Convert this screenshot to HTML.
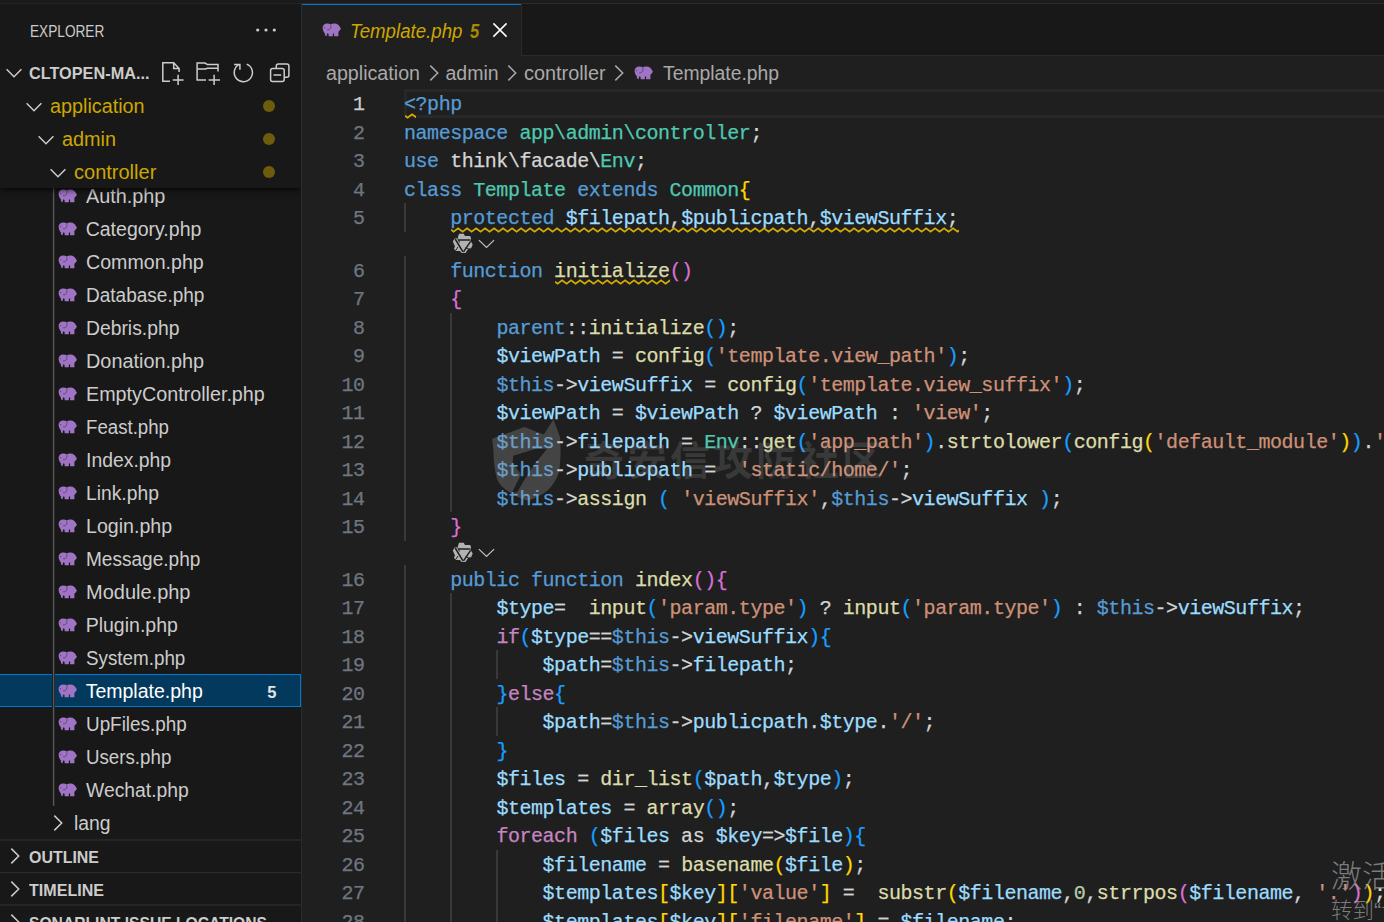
<!DOCTYPE html>
<html lang="zh"><head><meta charset="utf-8"><title>Template.php - Visual Studio Code</title>
<style>
html,body{margin:0;padding:0}
body{width:1384px;height:922px;overflow:hidden;background:#1f1f1f;position:relative;font-family:"Liberation Sans","Noto Sans CJK SC",sans-serif;color:#ccc}
.abs,.tx,.ic,.ele,.ig,.ln,.cl,.sq,.sel,.dot,.lens,.hr{position:absolute}
.tx{white-space:pre;line-height:24px;transform-origin:0 50%;display:block}
.ig{width:2px}
.ln,.cl{height:28.5px;font:20.00px/28.5px "Liberation Mono",monospace;letter-spacing:-0.4560px;white-space:pre;padding-top:2.11px;box-sizing:border-box;-webkit-text-stroke:0.25px}
.ln{left:300px;width:64.500px;text-align:right;color:#6e7681;text-indent:0}
.ln.cur{color:#cccccc}
.cl{left:404px;color:#d4d4d4}
.k{color:#569cd6}.c{color:#c586c0}.v{color:#9cdcfe}.s{color:#ce9178}.f{color:#dcdcaa}.t{color:#4ec9b0}.n{color:#b5cea8}
.b1{color:#ffd700}.b2{color:#da70d6}.b3{color:#179fff}
.sq{overflow:hidden}.sq path{fill:none;stroke:#d4ad00;stroke-width:1.750px}
.sel{left:0;width:301px;height:33.600px;background:#04395e;box-sizing:border-box;border:1.500px solid #0078d4;border-left:0}
.dot{left:263px;width:12px;height:12px;border-radius:50%;background:#6d5c0e}
.hr{left:0;width:301px;height:1px;background:#2b2b2b;box-shadow:0 -1px 0 rgba(43,43,43,.35)}
</style></head><body>
<!-- top strip -->
<div class="abs" style="left:0;top:0;width:1384px;height:3px;background:#1c1c1c"></div>
<div class="abs" style="left:0;top:3px;width:1384px;height:1px;background:#2b2b2b"></div>

<!-- tabs -->
<div class="abs" style="left:302px;top:4px;width:1082px;height:52px;background:#181818"></div>
<div class="abs" style="left:302px;top:55px;width:1082px;height:1px;background:#2b2b2b"></div>
<div class="abs" style="left:302px;top:4px;width:219px;height:52px;background:#1f1f1f;border-top:1.500px solid #0078d4;box-sizing:border-box"></div>
<div class="abs" style="left:521px;top:4px;width:1px;height:52px;background:#2b2b2b"></div>
<svg class="ele" style="left:321.8px;top:22.5px" width="20" height="14" viewBox="0 0 20 14"><path fill="#a074c4" d="M.7 5.500C.3 3.200 2 .6 4.800.4 6.300.3 7.800.5 8.700 1.200 9.800.5 11.200.3 12.600.4c2.600 0 4.800 1.800 5.700 4.400l.8 1.300-.9.500c-.2.800-.9 1.600-1.800 2.200V13.200H12.100V10.400H10.900V13.200H6.600V10.900l-1-.6c-.6.500-1 1.300-.7 2.100l-.7.900c-1-.4-1.600-1.700-1.300-3C1.800 9.300.9 7.600.7 5.500Z"/><path fill="none" stroke="#2c1b3a" stroke-opacity=".55" stroke-width=".9" d="M8.700 1.200c.7 1.800.3 4-1.100 5.100-.8.600-1.800.7-2.600.3"/><circle cx="2.700" cy="4.600" r=".55" fill="#2c1b3a" fill-opacity=".7"/></svg>
<span class="tx" style="left:350.40px;top:18.84px;font-size:19.50px;color:#cca700;font-style:italic;transform:scaleX(0.9570);">Template.php</span>
<span class="tx" style="left:470.30px;top:18.84px;font-size:19.50px;color:#a88b00;font-weight:700;font-style:italic;transform:scaleX(0.8472);">5</span>
<svg class="ic" style="left:488px;top:18px" width="24" height="24" viewBox="0 0 24 24"><path d="M5.400 5.400 L18.600 18.600 M18.600 5.400 L5.400 18.600" stroke="#ffffff" stroke-width="1.500" fill="none"/></svg>

<!-- breadcrumbs -->
<span class="tx" style="left:326.30px;top:60.84px;font-size:19.50px;color:#a9a9a9;transform:scaleX(1.0082);">application</span>
<svg class="ic" style="left:421.5px;top:60.5px" width="24" height="24" viewBox="0 0 24 24"><path d="M8.300 4.600 L15.700 12 L8.300 19.400" fill="none" stroke="#a9a9a9" stroke-width="1.500"/></svg>
<span class="tx" style="left:445.50px;top:60.84px;font-size:19.50px;color:#a9a9a9;">admin</span>
<svg class="ic" style="left:500.3px;top:60.5px" width="24" height="24" viewBox="0 0 24 24"><path d="M8.300 4.600 L15.700 12 L8.300 19.400" fill="none" stroke="#a9a9a9" stroke-width="1.500"/></svg>
<span class="tx" style="left:523.90px;top:60.84px;font-size:19.50px;color:#a9a9a9;transform:scaleX(1.0187);">controller</span>
<svg class="ic" style="left:607.0px;top:60.5px" width="24" height="24" viewBox="0 0 24 24"><path d="M8.300 4.600 L15.700 12 L8.300 19.400" fill="none" stroke="#a9a9a9" stroke-width="1.500"/></svg>
<svg class="ele" style="left:634.2px;top:66.0px" width="20" height="14" viewBox="0 0 20 14"><path fill="#a074c4" d="M.7 5.500C.3 3.200 2 .6 4.800.4 6.300.3 7.800.5 8.700 1.200 9.800.5 11.200.3 12.600.4c2.600 0 4.800 1.800 5.700 4.400l.8 1.300-.9.500c-.2.800-.9 1.600-1.800 2.200V13.200H12.100V10.400H10.900V13.200H6.600V10.900l-1-.6c-.6.500-1 1.300-.7 2.100l-.7.900c-1-.4-1.600-1.700-1.300-3C1.800 9.300.9 7.600.7 5.500Z"/><path fill="none" stroke="#2c1b3a" stroke-opacity=".55" stroke-width=".9" d="M8.700 1.200c.7 1.800.3 4-1.100 5.100-.8.600-1.800.7-2.600.3"/><circle cx="2.700" cy="4.600" r=".55" fill="#2c1b3a" fill-opacity=".7"/></svg>
<span class="tx" style="left:663.20px;top:60.84px;font-size:19.50px;color:#a9a9a9;transform:scaleX(0.9908);">Template.php</span>

<!-- editor -->
<div class="abs" style="left:404px;top:89px;width:990px;height:29px;box-sizing:border-box;border:3px solid #282828"></div>
<div class="ig" style="left:404px;top:203.00px;height:28.50px;background:#393939"></div>
<div class="ig" style="left:404px;top:255.50px;height:285.00px;background:#393939"></div>
<div class="ig" style="left:404px;top:564.50px;height:357.50px;background:#393939"></div>
<div class="ig" style="left:450px;top:312.50px;height:199.50px;background:#393939"></div>
<div class="ig" style="left:450px;top:593.00px;height:329.00px;background:#393939"></div>
<div class="ig" style="left:496px;top:650.00px;height:28.50px;background:#393939"></div>
<div class="ig" style="left:496px;top:707.00px;height:28.50px;background:#393939"></div>
<div class="ig" style="left:496px;top:849.50px;height:72.50px;background:#393939"></div>
<div class="ln cur" style="top:89.00px">1</div>
<div class="cl" style="top:89.00px"><span class="k">&lt;?php</span></div>
<svg class="sq" style="left:404.50px;top:112.50px" width="11.55" height="6" viewBox="0 0 11.55 6"><path d="M0.0 2.7 L2.6 4.6 L7.1 1.3 L11.6 4.6 L16.1 1.3"/></svg>
<div class="ln" style="top:117.50px">2</div>
<div class="cl" style="top:117.50px"><span class="k">namespace</span> <span class="t">app\admin\controller</span>;</div>
<div class="ln" style="top:146.00px">3</div>
<div class="cl" style="top:146.00px"><span class="k">use</span> think\facade\<span class="t">Env</span>;</div>
<div class="ln" style="top:174.50px">4</div>
<div class="cl" style="top:174.50px"><span class="k">class</span> <span class="t">Template</span> <span class="k">extends</span> <span class="t">Common</span><span class="b1">{</span></div>
<div class="ln" style="top:203.00px">5</div>
<div class="cl" style="top:203.00px">    <span class="k">protected</span> <span class="v">$filepath</span>,<span class="v">$publicpath</span>,<span class="v">$viewSuffix</span>;</div>
<svg class="sq" style="left:450.68px;top:226.50px" width="508.02" height="6" viewBox="0 0 508.02 6"><path d="M0.0 2.7 L2.6 4.6 L7.1 1.3 L11.6 4.6 L16.1 1.3 L20.6 4.6 L25.1 1.3 L29.6 4.6 L34.1 1.3 L38.6 4.6 L43.1 1.3 L47.6 4.6 L52.1 1.3 L56.6 4.6 L61.1 1.3 L65.6 4.6 L70.1 1.3 L74.6 4.6 L79.1 1.3 L83.6 4.6 L88.1 1.3 L92.6 4.6 L97.1 1.3 L101.6 4.6 L106.1 1.3 L110.6 4.6 L115.1 1.3 L119.6 4.6 L124.1 1.3 L128.6 4.6 L133.1 1.3 L137.6 4.6 L142.1 1.3 L146.6 4.6 L151.1 1.3 L155.6 4.6 L160.1 1.3 L164.6 4.6 L169.1 1.3 L173.6 4.6 L178.1 1.3 L182.6 4.6 L187.1 1.3 L191.6 4.6 L196.1 1.3 L200.6 4.6 L205.1 1.3 L209.6 4.6 L214.1 1.3 L218.6 4.6 L223.1 1.3 L227.6 4.6 L232.1 1.3 L236.6 4.6 L241.1 1.3 L245.6 4.6 L250.1 1.3 L254.6 4.6 L259.1 1.3 L263.6 4.6 L268.1 1.3 L272.6 4.6 L277.1 1.3 L281.6 4.6 L286.1 1.3 L290.6 4.6 L295.1 1.3 L299.6 4.6 L304.1 1.3 L308.6 4.6 L313.1 1.3 L317.6 4.6 L322.1 1.3 L326.6 4.6 L331.1 1.3 L335.6 4.6 L340.1 1.3 L344.6 4.6 L349.1 1.3 L353.6 4.6 L358.1 1.3 L362.6 4.6 L367.1 1.3 L371.6 4.6 L376.1 1.3 L380.6 4.6 L385.1 1.3 L389.6 4.6 L394.1 1.3 L398.6 4.6 L403.1 1.3 L407.6 4.6 L412.1 1.3 L416.6 4.6 L421.1 1.3 L425.6 4.6 L430.1 1.3 L434.6 4.6 L439.1 1.3 L443.6 4.6 L448.1 1.3 L452.6 4.6 L457.1 1.3 L461.6 4.6 L466.1 1.3 L470.6 4.6 L475.1 1.3 L479.6 4.6 L484.1 1.3 L488.6 4.6 L493.1 1.3 L497.6 4.6 L502.1 1.3 L506.6 4.6 L511.1 1.3 L515.6 4.6"/></svg>
<div class="ln" style="top:255.50px">6</div>
<div class="cl" style="top:255.50px">    <span class="k">function</span> <span class="f">initialize</span><span class="b2">()</span></div>
<svg class="sq" style="left:554.60px;top:279.00px" width="115.46" height="6" viewBox="0 0 115.46 6"><path d="M0.0 2.7 L2.6 4.6 L7.1 1.3 L11.6 4.6 L16.1 1.3 L20.6 4.6 L25.1 1.3 L29.6 4.6 L34.1 1.3 L38.6 4.6 L43.1 1.3 L47.6 4.6 L52.1 1.3 L56.6 4.6 L61.1 1.3 L65.6 4.6 L70.1 1.3 L74.6 4.6 L79.1 1.3 L83.6 4.6 L88.1 1.3 L92.6 4.6 L97.1 1.3 L101.6 4.6 L106.1 1.3 L110.6 4.6 L115.1 1.3 L119.6 4.6 L124.1 1.3"/></svg>
<div class="ln" style="top:284.00px">7</div>
<div class="cl" style="top:284.00px">    <span class="b2">{</span></div>
<div class="ln" style="top:312.50px">8</div>
<div class="cl" style="top:312.50px">        <span class="k">parent</span>::<span class="f">initialize</span><span class="b3">()</span>;</div>
<div class="ln" style="top:341.00px">9</div>
<div class="cl" style="top:341.00px">        <span class="v">$viewPath</span> = <span class="f">config</span><span class="b3">(</span><span class="s">'template.view_path'</span><span class="b3">)</span>;</div>
<div class="ln" style="top:369.50px">10</div>
<div class="cl" style="top:369.50px">        <span class="k">$this</span>-&gt;<span class="v">viewSuffix</span> = <span class="f">config</span><span class="b3">(</span><span class="s">'template.view_suffix'</span><span class="b3">)</span>;</div>
<div class="ln" style="top:398.00px">11</div>
<div class="cl" style="top:398.00px">        <span class="v">$viewPath</span> = <span class="v">$viewPath</span> ? <span class="v">$viewPath</span> : <span class="s">'view'</span>;</div>
<div class="ln" style="top:426.50px">12</div>
<div class="cl" style="top:426.50px">        <span class="k">$this</span>-&gt;<span class="v">filepath</span> = <span class="t">Env</span>::<span class="f">get</span><span class="b3">(</span><span class="s">'app_path'</span><span class="b3">)</span>.<span class="f">strtolower</span><span class="b3">(</span><span class="f">config</span><span class="b1">(</span><span class="s">'default_module'</span><span class="b1">)</span><span class="b3">)</span>.<span class="s">'/'</span></div>
<div class="ln" style="top:455.00px">13</div>
<div class="cl" style="top:455.00px">        <span class="k">$this</span>-&gt;<span class="v">publicpath</span> =  <span class="s">'static/home/'</span>;</div>
<div class="ln" style="top:483.50px">14</div>
<div class="cl" style="top:483.50px">        <span class="k">$this</span>-&gt;<span class="f">assign</span> <span class="b3">(</span> <span class="s">'viewSuffix'</span>,<span class="k">$this</span>-&gt;<span class="v">viewSuffix</span> <span class="b3">)</span>;</div>
<div class="ln" style="top:512.00px">15</div>
<div class="cl" style="top:512.00px">    <span class="b2">}</span></div>
<div class="ln" style="top:564.50px">16</div>
<div class="cl" style="top:564.50px">    <span class="k">public</span> <span class="k">function</span> <span class="f">index</span><span class="b2">()</span><span class="b2">{</span></div>
<div class="ln" style="top:593.00px">17</div>
<div class="cl" style="top:593.00px">        <span class="v">$type</span>=  <span class="f">input</span><span class="b3">(</span><span class="s">'param.type'</span><span class="b3">)</span> ? <span class="f">input</span><span class="b3">(</span><span class="s">'param.type'</span><span class="b3">)</span> : <span class="k">$this</span>-&gt;<span class="v">viewSuffix</span>;</div>
<div class="ln" style="top:621.50px">18</div>
<div class="cl" style="top:621.50px">        <span class="c">if</span><span class="b3">(</span><span class="v">$type</span>==<span class="k">$this</span>-&gt;<span class="v">viewSuffix</span><span class="b3">)</span><span class="b3">{</span></div>
<div class="ln" style="top:650.00px">19</div>
<div class="cl" style="top:650.00px">            <span class="v">$path</span>=<span class="k">$this</span>-&gt;<span class="v">filepath</span>;</div>
<div class="ln" style="top:678.50px">20</div>
<div class="cl" style="top:678.50px">        <span class="b3">}</span><span class="c">else</span><span class="b3">{</span></div>
<div class="ln" style="top:707.00px">21</div>
<div class="cl" style="top:707.00px">            <span class="v">$path</span>=<span class="k">$this</span>-&gt;<span class="v">publicpath</span>.<span class="v">$type</span>.<span class="s">'/'</span>;</div>
<div class="ln" style="top:735.50px">22</div>
<div class="cl" style="top:735.50px">        <span class="b3">}</span></div>
<div class="ln" style="top:764.00px">23</div>
<div class="cl" style="top:764.00px">        <span class="v">$files</span> = <span class="f">dir_list</span><span class="b3">(</span><span class="v">$path</span>,<span class="v">$type</span><span class="b3">)</span>;</div>
<div class="ln" style="top:792.50px">24</div>
<div class="cl" style="top:792.50px">        <span class="v">$templates</span> = <span class="f">array</span><span class="b3">()</span>;</div>
<div class="ln" style="top:821.00px">25</div>
<div class="cl" style="top:821.00px">        <span class="c">foreach</span> <span class="b3">(</span><span class="v">$files</span> as <span class="v">$key</span>=&gt;<span class="v">$file</span><span class="b3">)</span><span class="b3">{</span></div>
<div class="ln" style="top:849.50px">26</div>
<div class="cl" style="top:849.50px">            <span class="v">$filename</span> = <span class="f">basename</span><span class="b1">(</span><span class="v">$file</span><span class="b1">)</span>;</div>
<div class="ln" style="top:878.00px">27</div>
<div class="cl" style="top:878.00px">            <span class="v">$templates</span><span class="b1">[</span><span class="v">$key</span><span class="b1">]</span><span class="b1">[</span><span class="s">'value'</span><span class="b1">]</span> =  <span class="f">substr</span><span class="b1">(</span><span class="v">$filename</span>,<span class="n">0</span>,<span class="f">strrpos</span><span class="b2">(</span><span class="v">$filename</span>, <span class="s">'.'</span><span class="b2">)</span><span class="b1">)</span>;</div>
<div class="ln" style="top:906.50px">28</div>
<div class="cl" style="top:906.50px">            <span class="v">$templates</span><span class="b1">[</span><span class="v">$key</span><span class="b1">]</span><span class="b1">[</span><span class="s">'filename'</span><span class="b1">]</span> = <span class="v">$filename</span>;</div>
<svg class="lens" style="left:446px;top:230.00px" width="52" height="26" viewBox="0 0 52 26">
<path fill="#b2b2b2" d="M13 3.800 L17.800 3.800 L18.900 6.100 L24.200 6.100 L25.100 8.500 L24.200 10.300 L26.700 14.400 L25.100 18.200 L22.400 18.600 L19.600 23.100 L15.200 22.800 L14 20.900 L9.400 20.900 L8 18.400 L9 16.400 L6.800 11.400 L8.600 8.600 L11.600 8.300 Z"/>
<path fill="none" stroke="#1f1f1f" stroke-width="1.500" d="M12.800 9.900 H23.900 M9.200 9 L16.800 21.600 M24.600 11.400 L17.500 21.800"/>
<path fill="none" stroke="#1f1f1f" stroke-width="1" d="M11.600 8.300 L13.500 12.500 M22.400 18.600 L19.500 17.800 M9.400 20.900 L12 17"/>
<path d="M32.900 10.100 L40.500 17.400 L48.100 10.100" fill="none" stroke="#c0c0c0" stroke-width="1.250"/></svg>
<svg class="lens" style="left:446px;top:539.00px" width="52" height="26" viewBox="0 0 52 26">
<path fill="#b2b2b2" d="M13 3.800 L17.800 3.800 L18.900 6.100 L24.200 6.100 L25.100 8.500 L24.200 10.300 L26.700 14.400 L25.100 18.200 L22.400 18.600 L19.600 23.100 L15.200 22.800 L14 20.900 L9.400 20.900 L8 18.400 L9 16.400 L6.800 11.400 L8.600 8.600 L11.600 8.300 Z"/>
<path fill="none" stroke="#1f1f1f" stroke-width="1.500" d="M12.800 9.900 H23.900 M9.200 9 L16.800 21.600 M24.600 11.400 L17.500 21.800"/>
<path fill="none" stroke="#1f1f1f" stroke-width="1" d="M11.600 8.300 L13.500 12.500 M22.400 18.600 L19.500 17.800 M9.400 20.900 L12 17"/>
<path d="M32.900 10.100 L40.500 17.400 L48.100 10.100" fill="none" stroke="#c0c0c0" stroke-width="1.250"/></svg>

<!-- watermarks -->
<svg class="abs" style="left:484px;top:414px" width="100" height="92" viewBox="484 414 100 92"><path fill="#aaaaaa" fill-opacity=".27" fill-rule="evenodd" d="M492.200 438.700 L524.400 427 L543.900 434.400 L553.400 419.200 L560 437 L560.600 450 C560.600 458 560 466 559 472 C556.500 480 552.500 486 547.600 490.500 C541 495.500 534 499 527.400 500.600 C520.500 498.500 514 495.500 509 492 C503 488 499 484 497 479 C494.500 470 493.400 460 493.400 450 Z M536 448.700 L547 448.700 L536 462.600 L527.400 474.800 L517 492.500 L512 492.500 L521 474.500 L512.600 463 L513.300 455.800 Z"/></svg>
<div class="abs" style="left:584px;top:430.500px;font:700 40px/60px 'Liberation Sans','Noto Sans CJK SC',sans-serif;color:rgba(170,170,170,.185);white-space:nowrap;letter-spacing:3px">奇安信攻防社区</div>
<div class="abs" style="left:1331px;top:854.500px;font:300 31px/44px 'Liberation Sans','Noto Sans CJK SC',sans-serif;color:rgba(160,160,160,.72);white-space:nowrap">激活 Windows</div>
<div class="abs" style="left:1331px;top:896px;font:300 21.500px/30px 'Liberation Sans','Noto Sans CJK SC',sans-serif;color:rgba(160,160,160,.72);white-space:nowrap">转到“设置”以激活 Windows。</div>

<!-- sidebar -->
<div class="abs" style="left:0;top:4px;width:301px;height:918px;background:#181818"></div>
<div class="abs" style="left:0;top:0;width:301px;height:922px;overflow:hidden">
<svg class="ele" style="left:58.0px;top:188.5px" width="20" height="14" viewBox="0 0 20 14"><path fill="#a074c4" d="M.7 5.500C.3 3.200 2 .6 4.800.4 6.300.3 7.800.5 8.700 1.200 9.800.5 11.200.3 12.600.4c2.600 0 4.800 1.800 5.700 4.400l.8 1.300-.9.500c-.2.800-.9 1.600-1.800 2.200V13.200H12.100V10.400H10.900V13.200H6.600V10.900l-1-.6c-.6.500-1 1.300-.7 2.100l-.7.900c-1-.4-1.600-1.700-1.300-3C1.800 9.300.9 7.600.7 5.500Z"/><path fill="none" stroke="#2c1b3a" stroke-opacity=".55" stroke-width=".9" d="M8.700 1.200c.7 1.800.3 4-1.100 5.100-.8.600-1.800.7-2.600.3"/><circle cx="2.700" cy="4.600" r=".55" fill="#2c1b3a" fill-opacity=".7"/></svg>
<span class="tx" style="left:85.70px;top:183.94px;font-size:19.50px;color:#cccccc;transform:scaleX(1.0156);">Auth.php</span>
<svg class="ele" style="left:58.0px;top:221.5px" width="20" height="14" viewBox="0 0 20 14"><path fill="#a074c4" d="M.7 5.500C.3 3.200 2 .6 4.800.4 6.300.3 7.800.5 8.700 1.200 9.800.5 11.200.3 12.600.4c2.600 0 4.800 1.800 5.700 4.400l.8 1.300-.9.500c-.2.800-.9 1.600-1.800 2.200V13.200H12.100V10.400H10.900V13.200H6.600V10.900l-1-.6c-.6.500-1 1.300-.7 2.100l-.7.900c-1-.4-1.600-1.700-1.300-3C1.800 9.300.9 7.600.7 5.500Z"/><path fill="none" stroke="#2c1b3a" stroke-opacity=".55" stroke-width=".9" d="M8.700 1.200c.7 1.800.3 4-1.100 5.100-.8.600-1.800.7-2.600.3"/><circle cx="2.700" cy="4.600" r=".55" fill="#2c1b3a" fill-opacity=".7"/></svg>
<span class="tx" style="left:85.70px;top:216.94px;font-size:19.50px;color:#cccccc;">Category.php</span>
<svg class="ele" style="left:58.0px;top:254.5px" width="20" height="14" viewBox="0 0 20 14"><path fill="#a074c4" d="M.7 5.500C.3 3.200 2 .6 4.800.4 6.300.3 7.800.5 8.700 1.200 9.800.5 11.200.3 12.600.4c2.600 0 4.800 1.800 5.700 4.400l.8 1.300-.9.500c-.2.800-.9 1.600-1.800 2.200V13.200H12.100V10.400H10.900V13.200H6.600V10.900l-1-.6c-.6.500-1 1.300-.7 2.100l-.7.900c-1-.4-1.600-1.700-1.300-3C1.800 9.300.9 7.600.7 5.500Z"/><path fill="none" stroke="#2c1b3a" stroke-opacity=".55" stroke-width=".9" d="M8.700 1.200c.7 1.800.3 4-1.100 5.100-.8.600-1.800.7-2.600.3"/><circle cx="2.700" cy="4.600" r=".55" fill="#2c1b3a" fill-opacity=".7"/></svg>
<span class="tx" style="left:85.70px;top:249.94px;font-size:19.50px;color:#cccccc;transform:scaleX(1.0054);">Common.php</span>
<svg class="ele" style="left:58.0px;top:287.5px" width="20" height="14" viewBox="0 0 20 14"><path fill="#a074c4" d="M.7 5.500C.3 3.200 2 .6 4.800.4 6.300.3 7.800.5 8.700 1.200 9.800.5 11.200.3 12.600.4c2.600 0 4.800 1.800 5.700 4.400l.8 1.300-.9.500c-.2.800-.9 1.600-1.800 2.200V13.200H12.100V10.400H10.900V13.200H6.600V10.900l-1-.6c-.6.500-1 1.300-.7 2.100l-.7.900c-1-.4-1.600-1.700-1.300-3C1.800 9.300.9 7.600.7 5.500Z"/><path fill="none" stroke="#2c1b3a" stroke-opacity=".55" stroke-width=".9" d="M8.700 1.200c.7 1.800.3 4-1.100 5.100-.8.600-1.800.7-2.600.3"/><circle cx="2.700" cy="4.600" r=".55" fill="#2c1b3a" fill-opacity=".7"/></svg>
<span class="tx" style="left:85.70px;top:282.94px;font-size:19.50px;color:#cccccc;transform:scaleX(0.9750);">Database.php</span>
<svg class="ele" style="left:58.0px;top:320.5px" width="20" height="14" viewBox="0 0 20 14"><path fill="#a074c4" d="M.7 5.500C.3 3.200 2 .6 4.800.4 6.300.3 7.800.5 8.700 1.200 9.800.5 11.200.3 12.600.4c2.600 0 4.800 1.800 5.700 4.400l.8 1.300-.9.500c-.2.800-.9 1.600-1.800 2.200V13.200H12.100V10.400H10.900V13.200H6.600V10.900l-1-.6c-.6.500-1 1.300-.7 2.100l-.7.900c-1-.4-1.600-1.700-1.300-3C1.800 9.300.9 7.600.7 5.500Z"/><path fill="none" stroke="#2c1b3a" stroke-opacity=".55" stroke-width=".9" d="M8.700 1.200c.7 1.800.3 4-1.100 5.100-.8.600-1.800.7-2.600.3"/><circle cx="2.700" cy="4.600" r=".55" fill="#2c1b3a" fill-opacity=".7"/></svg>
<span class="tx" style="left:85.70px;top:315.94px;font-size:19.50px;color:#cccccc;transform:scaleX(0.9903);">Debris.php</span>
<svg class="ele" style="left:58.0px;top:353.5px" width="20" height="14" viewBox="0 0 20 14"><path fill="#a074c4" d="M.7 5.500C.3 3.200 2 .6 4.800.4 6.300.3 7.800.5 8.700 1.200 9.800.5 11.200.3 12.600.4c2.600 0 4.800 1.800 5.700 4.400l.8 1.300-.9.500c-.2.800-.9 1.600-1.800 2.200V13.200H12.100V10.400H10.900V13.200H6.600V10.900l-1-.6c-.6.500-1 1.300-.7 2.100l-.7.900c-1-.4-1.600-1.700-1.300-3C1.800 9.300.9 7.600.7 5.500Z"/><path fill="none" stroke="#2c1b3a" stroke-opacity=".55" stroke-width=".9" d="M8.700 1.200c.7 1.800.3 4-1.100 5.100-.8.600-1.800.7-2.600.3"/><circle cx="2.700" cy="4.600" r=".55" fill="#2c1b3a" fill-opacity=".7"/></svg>
<span class="tx" style="left:85.70px;top:348.94px;font-size:19.50px;color:#cccccc;transform:scaleX(1.0180);">Donation.php</span>
<svg class="ele" style="left:58.0px;top:386.5px" width="20" height="14" viewBox="0 0 20 14"><path fill="#a074c4" d="M.7 5.500C.3 3.200 2 .6 4.800.4 6.300.3 7.800.5 8.700 1.200 9.800.5 11.200.3 12.600.4c2.600 0 4.800 1.800 5.700 4.400l.8 1.300-.9.500c-.2.800-.9 1.600-1.800 2.200V13.200H12.100V10.400H10.900V13.200H6.600V10.900l-1-.6c-.6.500-1 1.300-.7 2.100l-.7.900c-1-.4-1.600-1.700-1.300-3C1.800 9.300.9 7.600.7 5.500Z"/><path fill="none" stroke="#2c1b3a" stroke-opacity=".55" stroke-width=".9" d="M8.700 1.200c.7 1.800.3 4-1.100 5.100-.8.600-1.800.7-2.600.3"/><circle cx="2.700" cy="4.600" r=".55" fill="#2c1b3a" fill-opacity=".7"/></svg>
<span class="tx" style="left:85.70px;top:381.94px;font-size:19.50px;color:#cccccc;transform:scaleX(1.0120);">EmptyController.php</span>
<svg class="ele" style="left:58.0px;top:419.5px" width="20" height="14" viewBox="0 0 20 14"><path fill="#a074c4" d="M.7 5.500C.3 3.200 2 .6 4.800.4 6.300.3 7.800.5 8.700 1.200 9.800.5 11.200.3 12.600.4c2.600 0 4.800 1.800 5.700 4.400l.8 1.300-.9.500c-.2.800-.9 1.600-1.800 2.200V13.200H12.100V10.400H10.900V13.200H6.600V10.900l-1-.6c-.6.500-1 1.300-.7 2.100l-.7.900c-1-.4-1.600-1.700-1.300-3C1.800 9.300.9 7.600.7 5.500Z"/><path fill="none" stroke="#2c1b3a" stroke-opacity=".55" stroke-width=".9" d="M8.700 1.200c.7 1.800.3 4-1.100 5.100-.8.600-1.800.7-2.600.3"/><circle cx="2.700" cy="4.600" r=".55" fill="#2c1b3a" fill-opacity=".7"/></svg>
<span class="tx" style="left:85.70px;top:414.94px;font-size:19.50px;color:#cccccc;transform:scaleX(0.9569);">Feast.php</span>
<svg class="ele" style="left:58.0px;top:452.5px" width="20" height="14" viewBox="0 0 20 14"><path fill="#a074c4" d="M.7 5.500C.3 3.200 2 .6 4.800.4 6.300.3 7.800.5 8.700 1.200 9.800.5 11.200.3 12.600.4c2.600 0 4.800 1.800 5.700 4.400l.8 1.300-.9.500c-.2.800-.9 1.600-1.800 2.200V13.200H12.100V10.400H10.900V13.200H6.600V10.900l-1-.6c-.6.500-1 1.300-.7 2.100l-.7.900c-1-.4-1.600-1.700-1.300-3C1.800 9.300.9 7.600.7 5.500Z"/><path fill="none" stroke="#2c1b3a" stroke-opacity=".55" stroke-width=".9" d="M8.700 1.200c.7 1.800.3 4-1.100 5.100-.8.600-1.800.7-2.600.3"/><circle cx="2.700" cy="4.600" r=".55" fill="#2c1b3a" fill-opacity=".7"/></svg>
<span class="tx" style="left:85.70px;top:447.94px;font-size:19.50px;color:#cccccc;transform:scaleX(0.9935);">Index.php</span>
<svg class="ele" style="left:58.0px;top:485.5px" width="20" height="14" viewBox="0 0 20 14"><path fill="#a074c4" d="M.7 5.500C.3 3.200 2 .6 4.800.4 6.300.3 7.800.5 8.700 1.200 9.800.5 11.200.3 12.600.4c2.600 0 4.800 1.800 5.700 4.400l.8 1.300-.9.500c-.2.800-.9 1.600-1.800 2.200V13.200H12.100V10.400H10.900V13.200H6.600V10.900l-1-.6c-.6.500-1 1.300-.7 2.100l-.7.900c-1-.4-1.600-1.700-1.300-3C1.800 9.300.9 7.600.7 5.500Z"/><path fill="none" stroke="#2c1b3a" stroke-opacity=".55" stroke-width=".9" d="M8.700 1.200c.7 1.800.3 4-1.100 5.100-.8.600-1.800.7-2.600.3"/><circle cx="2.700" cy="4.600" r=".55" fill="#2c1b3a" fill-opacity=".7"/></svg>
<span class="tx" style="left:85.70px;top:480.94px;font-size:19.50px;color:#cccccc;transform:scaleX(0.9887);">Link.php</span>
<svg class="ele" style="left:58.0px;top:518.5px" width="20" height="14" viewBox="0 0 20 14"><path fill="#a074c4" d="M.7 5.500C.3 3.200 2 .6 4.800.4 6.300.3 7.800.5 8.700 1.200 9.800.5 11.200.3 12.600.4c2.600 0 4.800 1.800 5.700 4.400l.8 1.300-.9.500c-.2.800-.9 1.600-1.800 2.200V13.200H12.100V10.400H10.900V13.200H6.600V10.900l-1-.6c-.6.500-1 1.300-.7 2.100l-.7.900c-1-.4-1.600-1.700-1.300-3C1.800 9.300.9 7.600.7 5.500Z"/><path fill="none" stroke="#2c1b3a" stroke-opacity=".55" stroke-width=".9" d="M8.700 1.200c.7 1.800.3 4-1.100 5.100-.8.600-1.800.7-2.600.3"/><circle cx="2.700" cy="4.600" r=".55" fill="#2c1b3a" fill-opacity=".7"/></svg>
<span class="tx" style="left:85.70px;top:513.94px;font-size:19.50px;color:#cccccc;transform:scaleX(1.0050);">Login.php</span>
<svg class="ele" style="left:58.0px;top:551.5px" width="20" height="14" viewBox="0 0 20 14"><path fill="#a074c4" d="M.7 5.500C.3 3.200 2 .6 4.800.4 6.300.3 7.800.5 8.700 1.200 9.800.5 11.200.3 12.600.4c2.600 0 4.800 1.800 5.700 4.400l.8 1.300-.9.500c-.2.800-.9 1.600-1.800 2.200V13.200H12.100V10.400H10.900V13.200H6.600V10.900l-1-.6c-.6.500-1 1.300-.7 2.100l-.7.900c-1-.4-1.600-1.700-1.300-3C1.800 9.300.9 7.600.7 5.500Z"/><path fill="none" stroke="#2c1b3a" stroke-opacity=".55" stroke-width=".9" d="M8.700 1.200c.7 1.800.3 4-1.100 5.100-.8.600-1.800.7-2.600.3"/><circle cx="2.700" cy="4.600" r=".55" fill="#2c1b3a" fill-opacity=".7"/></svg>
<span class="tx" style="left:85.70px;top:546.94px;font-size:19.50px;color:#cccccc;transform:scaleX(0.9763);">Message.php</span>
<svg class="ele" style="left:58.0px;top:584.5px" width="20" height="14" viewBox="0 0 20 14"><path fill="#a074c4" d="M.7 5.500C.3 3.200 2 .6 4.800.4 6.300.3 7.800.5 8.700 1.200 9.800.5 11.200.3 12.600.4c2.600 0 4.800 1.800 5.700 4.400l.8 1.300-.9.500c-.2.800-.9 1.600-1.800 2.200V13.200H12.100V10.400H10.900V13.200H6.600V10.900l-1-.6c-.6.500-1 1.300-.7 2.100l-.7.900c-1-.4-1.600-1.700-1.300-3C1.800 9.300.9 7.600.7 5.500Z"/><path fill="none" stroke="#2c1b3a" stroke-opacity=".55" stroke-width=".9" d="M8.700 1.200c.7 1.800.3 4-1.100 5.100-.8.600-1.800.7-2.600.3"/><circle cx="2.700" cy="4.600" r=".55" fill="#2c1b3a" fill-opacity=".7"/></svg>
<span class="tx" style="left:85.70px;top:579.94px;font-size:19.50px;color:#cccccc;transform:scaleX(1.0253);">Module.php</span>
<svg class="ele" style="left:58.0px;top:617.5px" width="20" height="14" viewBox="0 0 20 14"><path fill="#a074c4" d="M.7 5.500C.3 3.200 2 .6 4.800.4 6.300.3 7.800.5 8.700 1.200 9.800.5 11.200.3 12.600.4c2.600 0 4.800 1.800 5.700 4.400l.8 1.300-.9.500c-.2.800-.9 1.600-1.800 2.200V13.200H12.100V10.400H10.900V13.200H6.600V10.900l-1-.6c-.6.500-1 1.300-.7 2.100l-.7.900c-1-.4-1.600-1.700-1.300-3C1.800 9.300.9 7.600.7 5.500Z"/><path fill="none" stroke="#2c1b3a" stroke-opacity=".55" stroke-width=".9" d="M8.700 1.200c.7 1.800.3 4-1.100 5.100-.8.600-1.800.7-2.600.3"/><circle cx="2.700" cy="4.600" r=".55" fill="#2c1b3a" fill-opacity=".7"/></svg>
<span class="tx" style="left:85.70px;top:612.94px;font-size:19.50px;color:#cccccc;">Plugin.php</span>
<svg class="ele" style="left:58.0px;top:650.5px" width="20" height="14" viewBox="0 0 20 14"><path fill="#a074c4" d="M.7 5.500C.3 3.200 2 .6 4.800.4 6.300.3 7.800.5 8.700 1.200 9.800.5 11.200.3 12.600.4c2.600 0 4.800 1.800 5.700 4.400l.8 1.300-.9.500c-.2.800-.9 1.600-1.800 2.200V13.200H12.100V10.400H10.900V13.200H6.600V10.900l-1-.6c-.6.500-1 1.300-.7 2.100l-.7.900c-1-.4-1.600-1.700-1.300-3C1.800 9.300.9 7.600.7 5.500Z"/><path fill="none" stroke="#2c1b3a" stroke-opacity=".55" stroke-width=".9" d="M8.700 1.200c.7 1.800.3 4-1.100 5.100-.8.600-1.800.7-2.600.3"/><circle cx="2.700" cy="4.600" r=".55" fill="#2c1b3a" fill-opacity=".7"/></svg>
<span class="tx" style="left:85.70px;top:645.94px;font-size:19.50px;color:#cccccc;transform:scaleX(0.9644);">System.php</span>
<div class="sel" style="top:673.7px"></div>
<svg class="ele" style="left:58.0px;top:683.5px" width="20" height="14" viewBox="0 0 20 14"><path fill="#a074c4" d="M.7 5.500C.3 3.200 2 .6 4.800.4 6.300.3 7.800.5 8.700 1.200 9.800.5 11.200.3 12.600.4c2.600 0 4.800 1.800 5.700 4.400l.8 1.300-.9.500c-.2.800-.9 1.600-1.800 2.200V13.200H12.100V10.400H10.900V13.200H6.600V10.900l-1-.6c-.6.500-1 1.300-.7 2.100l-.7.900c-1-.4-1.600-1.700-1.300-3C1.800 9.300.9 7.600.7 5.500Z"/><path fill="none" stroke="#2c1b3a" stroke-opacity=".55" stroke-width=".9" d="M8.700 1.200c.7 1.800.3 4-1.100 5.100-.8.600-1.800.7-2.600.3"/><circle cx="2.700" cy="4.600" r=".55" fill="#2c1b3a" fill-opacity=".7"/></svg>
<span class="tx" style="left:85.70px;top:678.94px;font-size:19.50px;color:#ffffff;">Template.php</span>
<span class="tx" style="left:267.20px;top:679.98px;font-size:16.50px;color:#e4e4e4;font-weight:700;">5</span>
<svg class="ele" style="left:58.0px;top:716.5px" width="20" height="14" viewBox="0 0 20 14"><path fill="#a074c4" d="M.7 5.500C.3 3.200 2 .6 4.800.4 6.300.3 7.800.5 8.700 1.200 9.800.5 11.200.3 12.600.4c2.600 0 4.800 1.800 5.700 4.400l.8 1.300-.9.500c-.2.800-.9 1.600-1.800 2.200V13.200H12.100V10.400H10.900V13.200H6.600V10.900l-1-.6c-.6.500-1 1.300-.7 2.100l-.7.900c-1-.4-1.600-1.700-1.300-3C1.800 9.300.9 7.600.7 5.500Z"/><path fill="none" stroke="#2c1b3a" stroke-opacity=".55" stroke-width=".9" d="M8.700 1.200c.7 1.800.3 4-1.100 5.100-.8.600-1.800.7-2.600.3"/><circle cx="2.700" cy="4.600" r=".55" fill="#2c1b3a" fill-opacity=".7"/></svg>
<span class="tx" style="left:85.70px;top:711.94px;font-size:19.50px;color:#cccccc;transform:scaleX(0.9677);">UpFiles.php</span>
<svg class="ele" style="left:58.0px;top:749.5px" width="20" height="14" viewBox="0 0 20 14"><path fill="#a074c4" d="M.7 5.500C.3 3.200 2 .6 4.800.4 6.300.3 7.800.5 8.700 1.200 9.800.5 11.200.3 12.600.4c2.600 0 4.800 1.800 5.700 4.400l.8 1.300-.9.500c-.2.800-.9 1.600-1.800 2.200V13.200H12.100V10.400H10.900V13.200H6.600V10.900l-1-.6c-.6.500-1 1.300-.7 2.100l-.7.900c-1-.4-1.600-1.700-1.300-3C1.800 9.300.9 7.600.7 5.500Z"/><path fill="none" stroke="#2c1b3a" stroke-opacity=".55" stroke-width=".9" d="M8.700 1.200c.7 1.800.3 4-1.100 5.100-.8.600-1.800.7-2.600.3"/><circle cx="2.700" cy="4.600" r=".55" fill="#2c1b3a" fill-opacity=".7"/></svg>
<span class="tx" style="left:85.70px;top:744.94px;font-size:19.50px;color:#cccccc;transform:scaleX(0.9598);">Users.php</span>
<svg class="ele" style="left:58.0px;top:782.5px" width="20" height="14" viewBox="0 0 20 14"><path fill="#a074c4" d="M.7 5.500C.3 3.200 2 .6 4.800.4 6.300.3 7.800.5 8.700 1.200 9.800.5 11.200.3 12.600.4c2.600 0 4.800 1.800 5.700 4.400l.8 1.300-.9.500c-.2.800-.9 1.600-1.800 2.200V13.200H12.100V10.400H10.900V13.200H6.600V10.900l-1-.6c-.6.500-1 1.300-.7 2.100l-.7.900c-1-.4-1.600-1.700-1.300-3C1.800 9.300.9 7.600.7 5.500Z"/><path fill="none" stroke="#2c1b3a" stroke-opacity=".55" stroke-width=".9" d="M8.700 1.200c.7 1.800.3 4-1.100 5.100-.8.600-1.800.7-2.600.3"/><circle cx="2.700" cy="4.600" r=".55" fill="#2c1b3a" fill-opacity=".7"/></svg>
<span class="tx" style="left:85.70px;top:777.94px;font-size:19.50px;color:#cccccc;transform:scaleX(0.9911);">Wechat.php</span>
<div class="abs" style="left:53px;top:179px;width:1px;height:627px;background:#585858"></div><div class="abs" style="left:54px;top:179px;width:1px;height:627px;background:#2a2a2a"></div><div class="abs" style="left:52px;top:179px;width:1px;height:627px;background:#1f1f1f"></div>
<svg class="ic" style="left:46.4px;top:811.1px" width="24" height="24" viewBox="0 0 24 24"><path d="M8.300 4.600 L15.700 12 L8.300 19.400" fill="none" stroke="#cccccc" stroke-width="1.500"/></svg>
<span class="tx" style="left:74.40px;top:810.94px;font-size:19.50px;color:#cccccc;transform:scaleX(0.9925);">lang</span>
<div class="abs" style="left:0;top:4px;width:301px;height:183.500px;background:#181818;box-shadow:0 2px 6px rgba(0,0,0,.75)"></div>
<span class="tx" style="left:29.80px;top:19.48px;font-size:16.50px;color:#cccccc;transform:scaleX(0.8267);">EXPLORER</span>
<svg class="ic" style="left:254px;top:18px" width="24" height="24" viewBox="0 0 24 24" fill="#cccccc"><circle cx="3.700" cy="12" r="1.600"/><circle cx="12" cy="12" r="1.600"/><circle cx="20.300" cy="12" r="1.600"/></svg>
<svg class="ic" style="left:2.0px;top:61.0px" width="24" height="24" viewBox="0 0 24 24"><path d="M4.600 8.300 L12 15.700 L19.400 8.300" fill="none" stroke="#cccccc" stroke-width="1.500"/></svg>
<span class="tx" style="left:29.00px;top:61.18px;font-size:16.50px;color:#cccccc;font-weight:700;transform:scaleX(0.9858);">CLTOPEN-MA...</span>
<svg class="ic" style="left:21.5px;top:94.5px" width="24" height="24" viewBox="0 0 24 24"><path d="M4.600 8.300 L12 15.700 L19.400 8.300" fill="none" stroke="#cccccc" stroke-width="1.500"/></svg>
<span class="tx" style="left:50.30px;top:93.94px;font-size:19.50px;color:#cca700;transform:scaleX(1.0146);">application</span>
<svg class="ic" style="left:33.5px;top:127.5px" width="24" height="24" viewBox="0 0 24 24"><path d="M4.600 8.300 L12 15.700 L19.400 8.300" fill="none" stroke="#cccccc" stroke-width="1.500"/></svg>
<span class="tx" style="left:62.30px;top:126.94px;font-size:19.50px;color:#cca700;transform:scaleX(1.0165);">admin</span>
<svg class="ic" style="left:45.5px;top:160.5px" width="24" height="24" viewBox="0 0 24 24"><path d="M4.600 8.300 L12 15.700 L19.400 8.300" fill="none" stroke="#cccccc" stroke-width="1.500"/></svg>
<span class="tx" style="left:74.30px;top:159.94px;font-size:19.50px;color:#cca700;transform:scaleX(1.0261);">controller</span>
<div class="dot" style="top:99.5px"></div>
<div class="dot" style="top:132.5px"></div>
<div class="dot" style="top:165.5px"></div>
<svg class="ic" style="left:155px;top:56px" width="146" height="36" viewBox="0 0 146 36" fill="none" stroke="#cccccc" stroke-width="1.500">
<path d="M15 25.200 H7.800 V6.800 H18.700 L24.100 12.500 V16 M18.700 6.800 V12.500 H24.100 M23.100 18.700 V28.900 M17.700 23.900 H28.600"/>
<path d="M51 24.100 H42.100 V7 H50 L52.500 8.600 H63 V15.600 M42.100 13 H50.500 L52.300 12.200 H63 M59.100 18.700 V28.900 M53.600 24 H65"/>
<path d="M84.300 8.400 A9.100 9.100 0 1 0 91.700 8.100 M79.100 8.500 H84.900 V13.700"/>
<rect x="115.600" y="12.500" width="13.600" height="13" rx="2"/><path d="M121.300 12.500 V10 a2 2 0 0 1 2 -2 H131.900 a2 2 0 0 1 2 2 V19.300 a2 2 0 0 1 -2 2 H129.200 M118.500 19 H126.200"/>
</svg>
<!-- bottom panes -->
<div class="abs" style="left:0;top:839px;width:301px;height:83px;background:#181818"></div>
<div class="hr" style="top:839px;height:2px;background:#252525;box-shadow:none"></div><div class="hr" style="top:872px;box-shadow:0 1px 0 rgba(43,43,43,.3)"></div><div class="hr" style="top:904px;height:2px;background:#252525;box-shadow:none"></div>
<svg class="ic" style="left:2.5px;top:844.1px" width="24" height="24" viewBox="0 0 24 24"><path d="M8.300 4.600 L15.700 12 L8.300 19.400" fill="none" stroke="#cccccc" stroke-width="1.500"/></svg>
<span class="tx" style="left:29.00px;top:845.08px;font-size:16.50px;color:#cccccc;font-weight:700;transform:scaleX(0.9666);">OUTLINE</span>
<svg class="ic" style="left:2.5px;top:877.1px" width="24" height="24" viewBox="0 0 24 24"><path d="M8.300 4.600 L15.700 12 L8.300 19.400" fill="none" stroke="#cccccc" stroke-width="1.500"/></svg>
<span class="tx" style="left:29.00px;top:878.08px;font-size:16.50px;color:#cccccc;font-weight:700;transform:scaleX(0.9740);">TIMELINE</span>
<svg class="ic" style="left:2.5px;top:910.1px" width="24" height="24" viewBox="0 0 24 24"><path d="M8.300 4.600 L15.700 12 L8.300 19.400" fill="none" stroke="#cccccc" stroke-width="1.500"/></svg>
<span class="tx" style="left:29.00px;top:910.88px;font-size:16.50px;color:#cccccc;font-weight:700;transform:scaleX(0.9487);">SONARLINT ISSUE LOCATIONS</span>
</div>
<div class="abs" style="left:301px;top:4px;width:1px;height:918px;background:#2b2b2b"></div>
</body></html>
